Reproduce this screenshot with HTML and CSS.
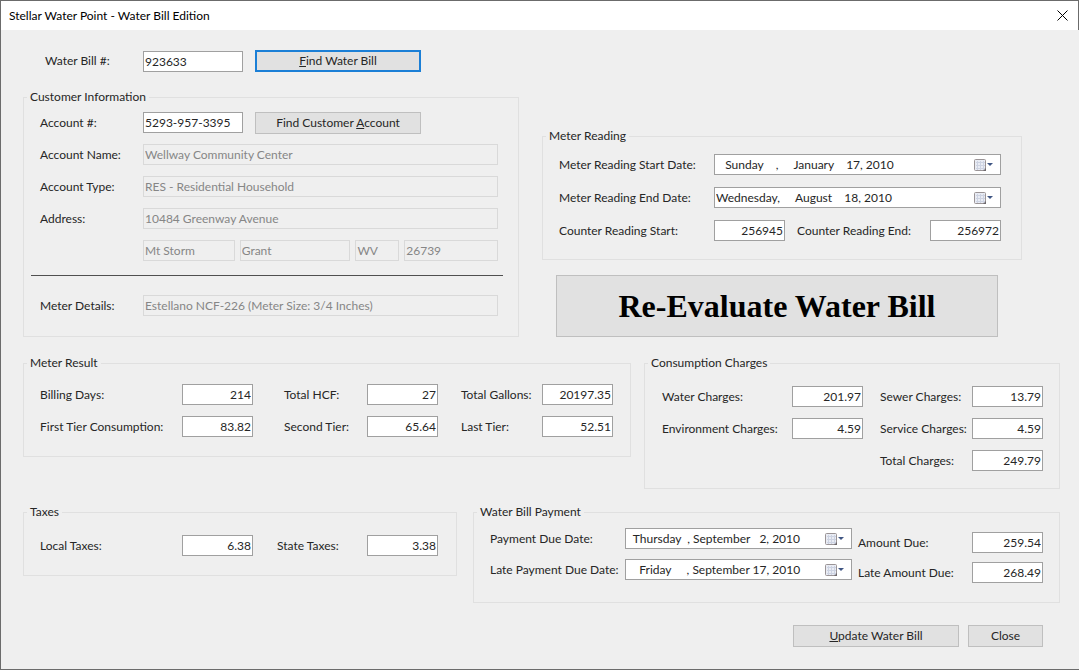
FILE: index.html
```html
<!DOCTYPE html>
<html lang="en">
<head>
    <meta charset="UTF-8">
    <meta name="viewport" content="width=device-width, initial-scale=1.0">
    <title>Stellar Water Point - Water Bill Edition</title>
    <link rel="stylesheet" href="styles.css">
</head>
<body>
    <svg width="0" height="0" class="sprite">
        <symbol id="calendar" viewBox="0 0 20 14">
            <rect x="1.5" y="1.5" width="11" height="11" rx="1" fill="#e9ecf4" stroke="#9a9496"/>
            <path d="M4.5 3v9M7.5 3v9M10.5 3v9M3 4.5h9M3 7.5h9M3 10.5h9" stroke="#cdd3e2" fill="none"/>
            <path d="M10 13l3-3v3z" fill="#6f6a6e"/>
            <path d="M14 5h6l-3 3z" fill="#3f5583"/>
        </symbol>
    </svg>
    <div class="window">
        <header class="title-bar">
            <span>Stellar Water Point - Water Bill Edition</span>
            <button type="button" class="close-x" aria-label="Close window">
                <svg width="11" height="11" viewBox="0 0 11 11"><path d="M.5.5l10 10M10.5.5l-10 10" stroke="#000" fill="none"/></svg>
            </button>
        </header>
        <form class="content">
            <div class="top">
                <div class="customer">
                    <div class="find-row">
                        <label for="billNumber">Water Bill #:</label>
                        <input type="text" id="billNumber" class="key" value="923633">
                        <button type="button" class="btn wide default"><u>F</u>ind Water Bill</button>
                    </div>
                    <fieldset>
                        <legend>Customer Information</legend>
                        <div class="fields customer-fields">
                            <label for="accountNumber">Account #:</label>
                            <div class="inline">
                                <input type="text" id="accountNumber" class="key" value="5293-957-3395">
                                <button type="button" class="btn wide">Find Customer <u>A</u>ccount</button>
                            </div>
                            <label for="accountName">Account Name:</label>
                            <input type="text" id="accountName" value="Wellway Community Center" disabled>
                            <label for="accountType">Account Type:</label>
                            <input type="text" id="accountType" value="RES - Residential Household" disabled>
                            <label for="address">Address:</label>
                            <input type="text" id="address" value="10484 Greenway Avenue" disabled>
                            <div class="city-line">
                                <input type="text" aria-label="City" value="Mt Storm" disabled>
                                <input type="text" aria-label="County" value="Grant" disabled>
                                <input type="text" aria-label="State" value="WV" disabled>
                                <input type="text" aria-label="ZIP code" value="26739" disabled>
                            </div>
                        </div>
                        <hr>
                        <div class="fields customer-fields meter-details">
                            <label for="meterDetails">Meter Details:</label>
                            <input type="text" id="meterDetails" value="Estellano NCF-226 (Meter Size: 3/4 Inches)" disabled>
                        </div>
                    </fieldset>
                </div>
                <div class="reading">
                    <fieldset>
                        <legend>Meter Reading</legend>
                        <div class="fields reading-fields">
                            <label for="startDate">Meter Reading Start Date:</label>
                            <div class="date">
                                <input type="text" id="startDate" value="   Sunday    ,     January    17, 2010">
                                <button type="button" aria-label="Pick start date"><svg width="20" height="14"><use href="#calendar"/></svg></button>
                            </div>
                            <label for="endDate">Meter Reading End Date:</label>
                            <div class="date">
                                <input type="text" id="endDate" value="Wednesday,     August    18, 2010">
                                <button type="button" aria-label="Pick end date"><svg width="20" height="14"><use href="#calendar"/></svg></button>
                            </div>
                            <label for="counterStart">Counter Reading Start:</label>
                            <input type="text" id="counterStart" class="num" value="256945">
                            <label for="counterEnd" class="second">Counter Reading End:</label>
                            <input type="text" id="counterEnd" class="num" value="256972">
                        </div>
                    </fieldset>
                    <button type="button" class="btn evaluate">Re-Evaluate Water Bill</button>
                </div>
            </div>

            <div class="results">
                <fieldset>
                    <legend>Meter Result</legend>
                    <div class="fields result-fields">
                        <label for="billingDays">Billing Days:</label>
                        <input type="text" id="billingDays" class="num" value="214">
                        <label for="totalHcf" class="second">Total HCF:</label>
                        <input type="text" id="totalHcf" class="num" value="27">
                        <label for="totalGallons" class="third">Total Gallons:</label>
                        <input type="text" id="totalGallons" class="num" value="20197.35">
                        <label for="firstTier">First Tier Consumption:</label>
                        <input type="text" id="firstTier" class="num" value="83.82">
                        <label for="secondTier" class="second">Second Tier:</label>
                        <input type="text" id="secondTier" class="num" value="65.64">
                        <label for="lastTier" class="third">Last Tier:</label>
                        <input type="text" id="lastTier" class="num" value="52.51">
                    </div>
                </fieldset>
                <fieldset>
                    <legend>Consumption Charges</legend>
                    <div class="fields charge-fields">
                        <label for="waterCharges">Water Charges:</label>
                        <input type="text" id="waterCharges" class="num" value="201.97">
                        <label for="sewerCharges" class="second">Sewer Charges:</label>
                        <input type="text" id="sewerCharges" class="num" value="13.79">
                        <label for="environmentCharges">Environment Charges:</label>
                        <input type="text" id="environmentCharges" class="num" value="4.59">
                        <label for="serviceCharges" class="second">Service Charges:</label>
                        <input type="text" id="serviceCharges" class="num" value="4.59">
                        <label for="totalCharges" class="second total">Total Charges:</label>
                        <input type="text" id="totalCharges" class="num" value="249.79">
                    </div>
                </fieldset>
            </div>

            <div class="payments">
                <fieldset>
                    <legend>Taxes</legend>
                    <div class="fields tax-fields">
                        <label for="localTaxes">Local Taxes:</label>
                        <input type="text" id="localTaxes" class="num" value="6.38">
                        <label for="stateTaxes" class="second">State Taxes:</label>
                        <input type="text" id="stateTaxes" class="num" value="3.38">
                    </div>
                </fieldset>
                <fieldset>
                    <legend>Water Bill Payment</legend>
                    <div class="payment-columns">
                        <div class="fields due-dates">
                            <label for="dueDate">Payment Due Date:</label>
                            <div class="date">
                                <input type="text" id="dueDate" value="  Thursday  , September   2, 2010">
                                <button type="button" aria-label="Pick due date"><svg width="20" height="14"><use href="#calendar"/></svg></button>
                            </div>
                            <label for="lateDueDate">Late Payment Due Date:</label>
                            <div class="date">
                                <input type="text" id="lateDueDate" value="    Friday     , September 17, 2010">
                                <button type="button" aria-label="Pick late due date"><svg width="20" height="14"><use href="#calendar"/></svg></button>
                            </div>
                        </div>
                        <div class="fields amounts">
                            <label for="amountDue">Amount Due:</label>
                            <input type="text" id="amountDue" class="num" value="259.54">
                            <label for="lateAmountDue">Late Amount Due:</label>
                            <input type="text" id="lateAmountDue" class="num" value="268.49">
                        </div>
                    </div>
                </fieldset>
            </div>

            <div class="actions">
                <button type="button" class="btn wide"><u>U</u>pdate Water Bill</button>
                <button type="button" class="btn close">Close</button>
            </div>
        </form>
    </div>
</body>
</html>
```
FILE: styles.css
```css
* {
    box-sizing: border-box;
}
body {
    margin: 0;
    background: #efefef;
    color: #262626;
    font-family: Lato, "Open Sans", sans-serif;
    font-size: 12px;
    line-height: 16px;
}
input, button {
    font: inherit;
    color: inherit;
    margin: 0;
}
.sprite {
    display: block;
}
.window {
    min-height: 100vh;
    border: 1px solid #6b6b6b;
    border-right: none;
}
.title-bar {
    display: flex;
    align-items: center;
    justify-content: space-between;
    height: 29px;
    padding: 0 10px 0 8px;
    border-right: 1px solid #6b6b6b;
    background: #fff;
    color: #000;
}
.close-x {
    display: flex;
    padding: 0;
    border: none;
    background: none;
}
.content {
    padding: 20px 19px 21px 22px;
}

/* group boxes */
fieldset {
    min-width: 0;
    margin: 0;
    padding: 0;
    border: 1px solid #e0e0e0;
}
legend {
    margin-left: 3px;
    padding: 0 3px;
}
.fields {
    display: grid;
    grid-auto-rows: 21px;
    row-gap: 11px;
    align-items: center;
}
label {
    white-space: nowrap;
}

/* controls */
input {
    width: 100%;
    min-width: 0;
    height: 21px;
    padding: 0 1px;
    border: 1px solid #a0a0a0;
    background: #fff;
}
input:disabled {
    border-color: #d9d9d9;
    background: #efefef;
    color: #868686;
}
.num {
    text-align: right;
}
.key {
    width: 100px;
}
.btn {
    height: 22px;
    padding: 0;
    border: 1px solid #bfbfbf;
    background: #e1e1e1;
}
.wide {
    width: 166px;
}
.default {
    border: 2px solid #1b7fd6;
}
.date {
    display: flex;
    align-items: center;
    height: 21px;
    border: 1px solid #a0a0a0;
    background: #fff;
}
.date input {
    flex: 1;
    height: 19px;
    border: none;
}
.date button {
    display: flex;
    padding: 0 7px 0 0;
    border: none;
    background: none;
}

/* customer and meter reading */
.top {
    display: grid;
    grid-template-columns: 496fr 480fr;
    column-gap: 23px;
    padding-right: 38px;
}
.find-row {
    display: grid;
    grid-template-columns: 98px 100px 166px;
    align-items: center;
    height: 21px;
    margin-bottom: 18px;
    padding-left: 22px;
}
.find-row .btn {
    margin-left: 12px;
}
.inline {
    display: flex;
    align-items: center;
    gap: 12px;
}
.customer-fields {
    grid-template-columns: 103px 1fr;
    padding: 7px 20px 0 16px;
}
.city-line {
    grid-column: 2;
    display: grid;
    grid-template-columns: 92fr 111fr 44fr 94fr;
    gap: 5px;
}
hr {
    margin: 14px 15px 0 7px;
    border: none;
    border-top: 1px solid #505050;
}
.meter-details {
    padding-top: 19px;
    padding-bottom: 20px;
}
.reading {
    padding-top: 78px;
}
.reading-fields {
    grid-template-columns: 155px 71px 1fr 71px;
    row-gap: 12px;
    padding: 10px 20px 18px 16px;
}
.reading-fields .date {
    grid-column: 2 / 5;
}
.reading-fields .second {
    padding-left: 12px;
}
.evaluate {
    display: block;
    width: calc(100% - 38px);
    height: 62px;
    margin: 15px 24px 0 14px;
    color: #000;
    font: bold 32px "Liberation Serif", serif;
}

/* results and charges */
.results {
    display: grid;
    grid-template-columns: 608fr 416fr;
    align-items: start;
    column-gap: 13px;
    margin-top: 18px;
}
.result-fields {
    grid-template-columns: 142fr 71px 114fr 71px 104fr 71px;
    padding: 13px 17px 19px 16px;
}
.result-fields .second {
    padding-left: 31px;
}
.result-fields .third {
    padding-left: 23px;
}
.charge-fields {
    grid-template-columns: 130fr 71px 109fr 71px;
    padding: 15px 16px 17px 17px;
}
.charge-fields .second {
    padding-left: 17px;
}
.charge-fields .total {
    grid-column: 3;
}

/* taxes and payment */
.payments {
    display: grid;
    grid-template-columns: 434fr 587fr;
    align-items: start;
    column-gap: 16px;
    margin-top: 15px;
}
.tax-fields {
    grid-template-columns: 142fr 71px 114fr 71px;
    padding: 15px 18px 19px 16px;
}
.tax-fields .second {
    padding-left: 24px;
}
.payment-columns {
    display: flex;
    gap: 6px;
    padding: 8px 16px 19px 16px;
}
.due-dates {
    flex: 1;
    grid-template-columns: 135px 1fr;
    row-gap: 10px;
}
.amounts {
    grid-template-columns: 114px 71px;
    row-gap: 9px;
    padding-top: 4px;
}
.actions {
    display: flex;
    justify-content: flex-end;
    gap: 9px;
    margin-top: 22px;
    padding-right: 17px;
}
.close {
    width: 75px;
}
```
